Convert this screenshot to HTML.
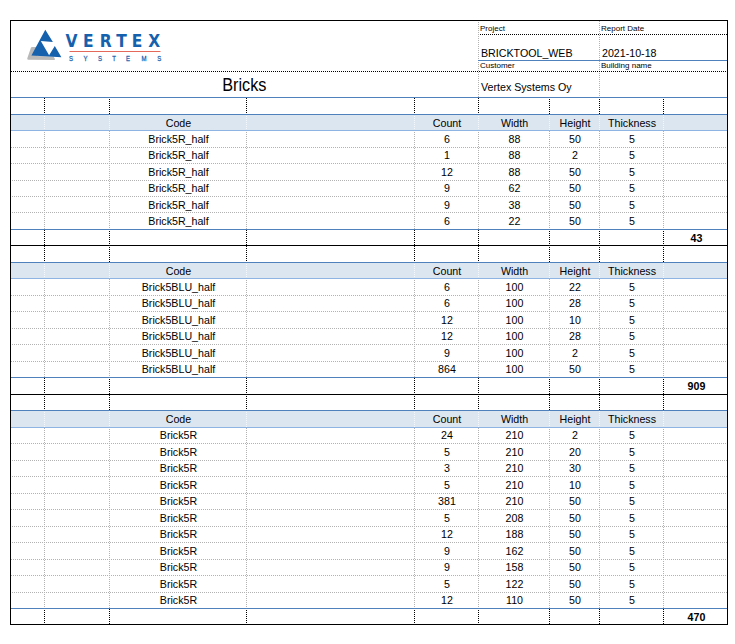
<!DOCTYPE html><html><head><meta charset="utf-8"><title>Bricks</title><style>
html,body{margin:0;padding:0;background:#fff}
body{width:735px;height:644px;position:relative;overflow:hidden;font-family:"Liberation Sans",sans-serif;font-size:10.67px;color:#000}
.h,.v,.t,.f{position:absolute}
.h{height:1px}.v{width:1px}
.t{white-space:nowrap;line-height:12px;height:12px}
.c{text-align:center}
.b{font-weight:bold}
.s{font-size:8px;line-height:10px;height:10px}
.hk,.hg,.vk,.vg,.vw{background-repeat:no-repeat}
.hk{background-image:repeating-linear-gradient(90deg,#000 0 1px,transparent 1px 2px)}
.hg{background-image:repeating-linear-gradient(90deg,#b2b2b2 0 1px,transparent 1px 2px)}
.vk{background-image:repeating-linear-gradient(180deg,#000 0 1px,transparent 1px 2px)}
.vg{background-image:repeating-linear-gradient(180deg,#b2b2b2 0 1px,transparent 1px 2px)}
.vw{background-image:repeating-linear-gradient(180deg,#f4f7fb 0 1px,transparent 1px 2px)}

</style></head><body>
<div class="f" style="left:11px;top:115px;width:716px;height:16px;background:#dce6f1"></div>
<div class="f" style="left:11px;top:263px;width:716px;height:16px;background:#dce6f1"></div>
<div class="f" style="left:11px;top:411px;width:716px;height:16px;background:#dce6f1"></div>
<div class="v vg" style="left:478px;top:21px;height:76px;background-position:0 1px"></div>
<div class="v vg" style="left:599px;top:21px;height:76px;background-position:0 0px"></div>
<div class="h hk" style="left:479px;top:34px;width:248px;background-position:1px 0"></div>
<div class="h" style="left:478px;top:60px;width:249px;background:#4f81bd"></div>
<div class="h hk" style="left:11px;top:71px;width:716px;background-position:0px 0"></div>
<div class="h" style="left:11px;top:97px;width:716px;background:#4f81bd"></div>
<div class="v vk" style="left:44px;top:98px;height:16px;background-position:0 0px"></div>
<div class="v vk" style="left:109px;top:98px;height:16px;background-position:0 1px"></div>
<div class="v vk" style="left:246px;top:98px;height:16px;background-position:0 0px"></div>
<div class="v vk" style="left:414px;top:98px;height:16px;background-position:0 0px"></div>
<div class="v vk" style="left:478px;top:98px;height:16px;background-position:0 0px"></div>
<div class="v vk" style="left:549px;top:98px;height:16px;background-position:0 1px"></div>
<div class="v vk" style="left:599px;top:98px;height:16px;background-position:0 1px"></div>
<div class="v vk" style="left:663px;top:98px;height:16px;background-position:0 1px"></div>
<div class="h" style="left:11px;top:114px;width:716px;background:#4f81bd"></div>
<div class="h" style="left:11px;top:130px;width:716px;background:#8db4e2"></div>
<div class="v vw" style="left:44px;top:115px;height:15px;background-position:0 1px"></div>
<div class="v vw" style="left:109px;top:115px;height:15px;background-position:0 0px"></div>
<div class="v vw" style="left:246px;top:115px;height:15px;background-position:0 1px"></div>
<div class="v vw" style="left:414px;top:115px;height:15px;background-position:0 1px"></div>
<div class="v vw" style="left:478px;top:115px;height:15px;background-position:0 1px"></div>
<div class="v vw" style="left:549px;top:115px;height:15px;background-position:0 0px"></div>
<div class="v vw" style="left:599px;top:115px;height:15px;background-position:0 0px"></div>
<div class="v vw" style="left:663px;top:115px;height:15px;background-position:0 0px"></div>
<div class="v vg" style="left:44px;top:131px;height:16px;background-position:0 1px"></div>
<div class="v vg" style="left:109px;top:131px;height:16px;background-position:0 0px"></div>
<div class="v vg" style="left:246px;top:131px;height:16px;background-position:0 1px"></div>
<div class="v vg" style="left:414px;top:131px;height:16px;background-position:0 1px"></div>
<div class="v vg" style="left:478px;top:131px;height:16px;background-position:0 1px"></div>
<div class="v vg" style="left:549px;top:131px;height:16px;background-position:0 0px"></div>
<div class="v vg" style="left:599px;top:131px;height:16px;background-position:0 0px"></div>
<div class="v vg" style="left:663px;top:131px;height:16px;background-position:0 0px"></div>
<div class="h hg" style="left:11px;top:147px;width:716px;background-position:0px 0"></div>
<div class="v vg" style="left:44px;top:148px;height:15px;background-position:0 0px"></div>
<div class="v vg" style="left:109px;top:148px;height:15px;background-position:0 1px"></div>
<div class="v vg" style="left:246px;top:148px;height:15px;background-position:0 0px"></div>
<div class="v vg" style="left:414px;top:148px;height:15px;background-position:0 0px"></div>
<div class="v vg" style="left:478px;top:148px;height:15px;background-position:0 0px"></div>
<div class="v vg" style="left:549px;top:148px;height:15px;background-position:0 1px"></div>
<div class="v vg" style="left:599px;top:148px;height:15px;background-position:0 1px"></div>
<div class="v vg" style="left:663px;top:148px;height:15px;background-position:0 1px"></div>
<div class="h hg" style="left:11px;top:163px;width:716px;background-position:0px 0"></div>
<div class="v vg" style="left:44px;top:164px;height:16px;background-position:0 0px"></div>
<div class="v vg" style="left:109px;top:164px;height:16px;background-position:0 1px"></div>
<div class="v vg" style="left:246px;top:164px;height:16px;background-position:0 0px"></div>
<div class="v vg" style="left:414px;top:164px;height:16px;background-position:0 0px"></div>
<div class="v vg" style="left:478px;top:164px;height:16px;background-position:0 0px"></div>
<div class="v vg" style="left:549px;top:164px;height:16px;background-position:0 1px"></div>
<div class="v vg" style="left:599px;top:164px;height:16px;background-position:0 1px"></div>
<div class="v vg" style="left:663px;top:164px;height:16px;background-position:0 1px"></div>
<div class="h hg" style="left:11px;top:180px;width:716px;background-position:1px 0"></div>
<div class="v vg" style="left:44px;top:181px;height:15px;background-position:0 1px"></div>
<div class="v vg" style="left:109px;top:181px;height:15px;background-position:0 0px"></div>
<div class="v vg" style="left:246px;top:181px;height:15px;background-position:0 1px"></div>
<div class="v vg" style="left:414px;top:181px;height:15px;background-position:0 1px"></div>
<div class="v vg" style="left:478px;top:181px;height:15px;background-position:0 1px"></div>
<div class="v vg" style="left:549px;top:181px;height:15px;background-position:0 0px"></div>
<div class="v vg" style="left:599px;top:181px;height:15px;background-position:0 0px"></div>
<div class="v vg" style="left:663px;top:181px;height:15px;background-position:0 0px"></div>
<div class="h hg" style="left:11px;top:196px;width:716px;background-position:1px 0"></div>
<div class="v vg" style="left:44px;top:197px;height:15px;background-position:0 1px"></div>
<div class="v vg" style="left:109px;top:197px;height:15px;background-position:0 0px"></div>
<div class="v vg" style="left:246px;top:197px;height:15px;background-position:0 1px"></div>
<div class="v vg" style="left:414px;top:197px;height:15px;background-position:0 1px"></div>
<div class="v vg" style="left:478px;top:197px;height:15px;background-position:0 1px"></div>
<div class="v vg" style="left:549px;top:197px;height:15px;background-position:0 0px"></div>
<div class="v vg" style="left:599px;top:197px;height:15px;background-position:0 0px"></div>
<div class="v vg" style="left:663px;top:197px;height:15px;background-position:0 0px"></div>
<div class="h hg" style="left:11px;top:212px;width:716px;background-position:1px 0"></div>
<div class="v vg" style="left:44px;top:213px;height:16px;background-position:0 1px"></div>
<div class="v vg" style="left:109px;top:213px;height:16px;background-position:0 0px"></div>
<div class="v vg" style="left:246px;top:213px;height:16px;background-position:0 1px"></div>
<div class="v vg" style="left:414px;top:213px;height:16px;background-position:0 1px"></div>
<div class="v vg" style="left:478px;top:213px;height:16px;background-position:0 1px"></div>
<div class="v vg" style="left:549px;top:213px;height:16px;background-position:0 0px"></div>
<div class="v vg" style="left:599px;top:213px;height:16px;background-position:0 0px"></div>
<div class="v vg" style="left:663px;top:213px;height:16px;background-position:0 0px"></div>
<div class="h" style="left:11px;top:229px;width:716px;background:#4f81bd"></div>
<div class="v vk" style="left:44px;top:230px;height:15px;background-position:0 0px"></div>
<div class="v vk" style="left:109px;top:230px;height:15px;background-position:0 1px"></div>
<div class="v vk" style="left:246px;top:230px;height:15px;background-position:0 0px"></div>
<div class="v vk" style="left:414px;top:230px;height:15px;background-position:0 0px"></div>
<div class="v vk" style="left:478px;top:230px;height:15px;background-position:0 0px"></div>
<div class="v vk" style="left:549px;top:230px;height:15px;background-position:0 1px"></div>
<div class="v vk" style="left:599px;top:230px;height:15px;background-position:0 1px"></div>
<div class="v vk" style="left:663px;top:230px;height:15px;background-position:0 1px"></div>
<div class="h" style="left:11px;top:245px;width:716px;background:#000"></div>
<div class="v vk" style="left:44px;top:246px;height:16px;background-position:0 0px"></div>
<div class="v vk" style="left:109px;top:246px;height:16px;background-position:0 1px"></div>
<div class="v vk" style="left:246px;top:246px;height:16px;background-position:0 0px"></div>
<div class="v vk" style="left:414px;top:246px;height:16px;background-position:0 0px"></div>
<div class="v vk" style="left:478px;top:246px;height:16px;background-position:0 0px"></div>
<div class="v vk" style="left:549px;top:246px;height:16px;background-position:0 1px"></div>
<div class="v vk" style="left:599px;top:246px;height:16px;background-position:0 1px"></div>
<div class="v vk" style="left:663px;top:246px;height:16px;background-position:0 1px"></div>
<div class="h" style="left:11px;top:262px;width:716px;background:#4f81bd"></div>
<div class="h" style="left:11px;top:278px;width:716px;background:#8db4e2"></div>
<div class="v vw" style="left:44px;top:263px;height:15px;background-position:0 1px"></div>
<div class="v vw" style="left:109px;top:263px;height:15px;background-position:0 0px"></div>
<div class="v vw" style="left:246px;top:263px;height:15px;background-position:0 1px"></div>
<div class="v vw" style="left:414px;top:263px;height:15px;background-position:0 1px"></div>
<div class="v vw" style="left:478px;top:263px;height:15px;background-position:0 1px"></div>
<div class="v vw" style="left:549px;top:263px;height:15px;background-position:0 0px"></div>
<div class="v vw" style="left:599px;top:263px;height:15px;background-position:0 0px"></div>
<div class="v vw" style="left:663px;top:263px;height:15px;background-position:0 0px"></div>
<div class="v vg" style="left:44px;top:279px;height:16px;background-position:0 1px"></div>
<div class="v vg" style="left:109px;top:279px;height:16px;background-position:0 0px"></div>
<div class="v vg" style="left:246px;top:279px;height:16px;background-position:0 1px"></div>
<div class="v vg" style="left:414px;top:279px;height:16px;background-position:0 1px"></div>
<div class="v vg" style="left:478px;top:279px;height:16px;background-position:0 1px"></div>
<div class="v vg" style="left:549px;top:279px;height:16px;background-position:0 0px"></div>
<div class="v vg" style="left:599px;top:279px;height:16px;background-position:0 0px"></div>
<div class="v vg" style="left:663px;top:279px;height:16px;background-position:0 0px"></div>
<div class="h hg" style="left:11px;top:295px;width:716px;background-position:0px 0"></div>
<div class="v vg" style="left:44px;top:296px;height:15px;background-position:0 0px"></div>
<div class="v vg" style="left:109px;top:296px;height:15px;background-position:0 1px"></div>
<div class="v vg" style="left:246px;top:296px;height:15px;background-position:0 0px"></div>
<div class="v vg" style="left:414px;top:296px;height:15px;background-position:0 0px"></div>
<div class="v vg" style="left:478px;top:296px;height:15px;background-position:0 0px"></div>
<div class="v vg" style="left:549px;top:296px;height:15px;background-position:0 1px"></div>
<div class="v vg" style="left:599px;top:296px;height:15px;background-position:0 1px"></div>
<div class="v vg" style="left:663px;top:296px;height:15px;background-position:0 1px"></div>
<div class="h hg" style="left:11px;top:311px;width:716px;background-position:0px 0"></div>
<div class="v vg" style="left:44px;top:312px;height:16px;background-position:0 0px"></div>
<div class="v vg" style="left:109px;top:312px;height:16px;background-position:0 1px"></div>
<div class="v vg" style="left:246px;top:312px;height:16px;background-position:0 0px"></div>
<div class="v vg" style="left:414px;top:312px;height:16px;background-position:0 0px"></div>
<div class="v vg" style="left:478px;top:312px;height:16px;background-position:0 0px"></div>
<div class="v vg" style="left:549px;top:312px;height:16px;background-position:0 1px"></div>
<div class="v vg" style="left:599px;top:312px;height:16px;background-position:0 1px"></div>
<div class="v vg" style="left:663px;top:312px;height:16px;background-position:0 1px"></div>
<div class="h hg" style="left:11px;top:328px;width:716px;background-position:1px 0"></div>
<div class="v vg" style="left:44px;top:329px;height:15px;background-position:0 1px"></div>
<div class="v vg" style="left:109px;top:329px;height:15px;background-position:0 0px"></div>
<div class="v vg" style="left:246px;top:329px;height:15px;background-position:0 1px"></div>
<div class="v vg" style="left:414px;top:329px;height:15px;background-position:0 1px"></div>
<div class="v vg" style="left:478px;top:329px;height:15px;background-position:0 1px"></div>
<div class="v vg" style="left:549px;top:329px;height:15px;background-position:0 0px"></div>
<div class="v vg" style="left:599px;top:329px;height:15px;background-position:0 0px"></div>
<div class="v vg" style="left:663px;top:329px;height:15px;background-position:0 0px"></div>
<div class="h hg" style="left:11px;top:344px;width:716px;background-position:1px 0"></div>
<div class="v vg" style="left:44px;top:345px;height:16px;background-position:0 1px"></div>
<div class="v vg" style="left:109px;top:345px;height:16px;background-position:0 0px"></div>
<div class="v vg" style="left:246px;top:345px;height:16px;background-position:0 1px"></div>
<div class="v vg" style="left:414px;top:345px;height:16px;background-position:0 1px"></div>
<div class="v vg" style="left:478px;top:345px;height:16px;background-position:0 1px"></div>
<div class="v vg" style="left:549px;top:345px;height:16px;background-position:0 0px"></div>
<div class="v vg" style="left:599px;top:345px;height:16px;background-position:0 0px"></div>
<div class="v vg" style="left:663px;top:345px;height:16px;background-position:0 0px"></div>
<div class="h hg" style="left:11px;top:361px;width:716px;background-position:0px 0"></div>
<div class="v vg" style="left:44px;top:362px;height:15px;background-position:0 0px"></div>
<div class="v vg" style="left:109px;top:362px;height:15px;background-position:0 1px"></div>
<div class="v vg" style="left:246px;top:362px;height:15px;background-position:0 0px"></div>
<div class="v vg" style="left:414px;top:362px;height:15px;background-position:0 0px"></div>
<div class="v vg" style="left:478px;top:362px;height:15px;background-position:0 0px"></div>
<div class="v vg" style="left:549px;top:362px;height:15px;background-position:0 1px"></div>
<div class="v vg" style="left:599px;top:362px;height:15px;background-position:0 1px"></div>
<div class="v vg" style="left:663px;top:362px;height:15px;background-position:0 1px"></div>
<div class="h" style="left:11px;top:377px;width:716px;background:#4f81bd"></div>
<div class="v vk" style="left:44px;top:378px;height:16px;background-position:0 0px"></div>
<div class="v vk" style="left:109px;top:378px;height:16px;background-position:0 1px"></div>
<div class="v vk" style="left:246px;top:378px;height:16px;background-position:0 0px"></div>
<div class="v vk" style="left:414px;top:378px;height:16px;background-position:0 0px"></div>
<div class="v vk" style="left:478px;top:378px;height:16px;background-position:0 0px"></div>
<div class="v vk" style="left:549px;top:378px;height:16px;background-position:0 1px"></div>
<div class="v vk" style="left:599px;top:378px;height:16px;background-position:0 1px"></div>
<div class="v vk" style="left:663px;top:378px;height:16px;background-position:0 1px"></div>
<div class="h" style="left:11px;top:394px;width:716px;background:#000"></div>
<div class="v vk" style="left:44px;top:395px;height:15px;background-position:0 1px"></div>
<div class="v vk" style="left:109px;top:395px;height:15px;background-position:0 0px"></div>
<div class="v vk" style="left:246px;top:395px;height:15px;background-position:0 1px"></div>
<div class="v vk" style="left:414px;top:395px;height:15px;background-position:0 1px"></div>
<div class="v vk" style="left:478px;top:395px;height:15px;background-position:0 1px"></div>
<div class="v vk" style="left:549px;top:395px;height:15px;background-position:0 0px"></div>
<div class="v vk" style="left:599px;top:395px;height:15px;background-position:0 0px"></div>
<div class="v vk" style="left:663px;top:395px;height:15px;background-position:0 0px"></div>
<div class="h" style="left:11px;top:410px;width:716px;background:#4f81bd"></div>
<div class="h" style="left:11px;top:427px;width:716px;background:#8db4e2"></div>
<div class="v vw" style="left:44px;top:411px;height:16px;background-position:0 1px"></div>
<div class="v vw" style="left:109px;top:411px;height:16px;background-position:0 0px"></div>
<div class="v vw" style="left:246px;top:411px;height:16px;background-position:0 1px"></div>
<div class="v vw" style="left:414px;top:411px;height:16px;background-position:0 1px"></div>
<div class="v vw" style="left:478px;top:411px;height:16px;background-position:0 1px"></div>
<div class="v vw" style="left:549px;top:411px;height:16px;background-position:0 0px"></div>
<div class="v vw" style="left:599px;top:411px;height:16px;background-position:0 0px"></div>
<div class="v vw" style="left:663px;top:411px;height:16px;background-position:0 0px"></div>
<div class="v vg" style="left:44px;top:428px;height:15px;background-position:0 0px"></div>
<div class="v vg" style="left:109px;top:428px;height:15px;background-position:0 1px"></div>
<div class="v vg" style="left:246px;top:428px;height:15px;background-position:0 0px"></div>
<div class="v vg" style="left:414px;top:428px;height:15px;background-position:0 0px"></div>
<div class="v vg" style="left:478px;top:428px;height:15px;background-position:0 0px"></div>
<div class="v vg" style="left:549px;top:428px;height:15px;background-position:0 1px"></div>
<div class="v vg" style="left:599px;top:428px;height:15px;background-position:0 1px"></div>
<div class="v vg" style="left:663px;top:428px;height:15px;background-position:0 1px"></div>
<div class="h hg" style="left:11px;top:443px;width:716px;background-position:0px 0"></div>
<div class="v vg" style="left:44px;top:444px;height:16px;background-position:0 0px"></div>
<div class="v vg" style="left:109px;top:444px;height:16px;background-position:0 1px"></div>
<div class="v vg" style="left:246px;top:444px;height:16px;background-position:0 0px"></div>
<div class="v vg" style="left:414px;top:444px;height:16px;background-position:0 0px"></div>
<div class="v vg" style="left:478px;top:444px;height:16px;background-position:0 0px"></div>
<div class="v vg" style="left:549px;top:444px;height:16px;background-position:0 1px"></div>
<div class="v vg" style="left:599px;top:444px;height:16px;background-position:0 1px"></div>
<div class="v vg" style="left:663px;top:444px;height:16px;background-position:0 1px"></div>
<div class="h hg" style="left:11px;top:460px;width:716px;background-position:1px 0"></div>
<div class="v vg" style="left:44px;top:461px;height:15px;background-position:0 1px"></div>
<div class="v vg" style="left:109px;top:461px;height:15px;background-position:0 0px"></div>
<div class="v vg" style="left:246px;top:461px;height:15px;background-position:0 1px"></div>
<div class="v vg" style="left:414px;top:461px;height:15px;background-position:0 1px"></div>
<div class="v vg" style="left:478px;top:461px;height:15px;background-position:0 1px"></div>
<div class="v vg" style="left:549px;top:461px;height:15px;background-position:0 0px"></div>
<div class="v vg" style="left:599px;top:461px;height:15px;background-position:0 0px"></div>
<div class="v vg" style="left:663px;top:461px;height:15px;background-position:0 0px"></div>
<div class="h hg" style="left:11px;top:476px;width:716px;background-position:1px 0"></div>
<div class="v vg" style="left:44px;top:477px;height:16px;background-position:0 1px"></div>
<div class="v vg" style="left:109px;top:477px;height:16px;background-position:0 0px"></div>
<div class="v vg" style="left:246px;top:477px;height:16px;background-position:0 1px"></div>
<div class="v vg" style="left:414px;top:477px;height:16px;background-position:0 1px"></div>
<div class="v vg" style="left:478px;top:477px;height:16px;background-position:0 1px"></div>
<div class="v vg" style="left:549px;top:477px;height:16px;background-position:0 0px"></div>
<div class="v vg" style="left:599px;top:477px;height:16px;background-position:0 0px"></div>
<div class="v vg" style="left:663px;top:477px;height:16px;background-position:0 0px"></div>
<div class="h hg" style="left:11px;top:493px;width:716px;background-position:0px 0"></div>
<div class="v vg" style="left:44px;top:494px;height:15px;background-position:0 0px"></div>
<div class="v vg" style="left:109px;top:494px;height:15px;background-position:0 1px"></div>
<div class="v vg" style="left:246px;top:494px;height:15px;background-position:0 0px"></div>
<div class="v vg" style="left:414px;top:494px;height:15px;background-position:0 0px"></div>
<div class="v vg" style="left:478px;top:494px;height:15px;background-position:0 0px"></div>
<div class="v vg" style="left:549px;top:494px;height:15px;background-position:0 1px"></div>
<div class="v vg" style="left:599px;top:494px;height:15px;background-position:0 1px"></div>
<div class="v vg" style="left:663px;top:494px;height:15px;background-position:0 1px"></div>
<div class="h hg" style="left:11px;top:509px;width:716px;background-position:0px 0"></div>
<div class="v vg" style="left:44px;top:510px;height:16px;background-position:0 0px"></div>
<div class="v vg" style="left:109px;top:510px;height:16px;background-position:0 1px"></div>
<div class="v vg" style="left:246px;top:510px;height:16px;background-position:0 0px"></div>
<div class="v vg" style="left:414px;top:510px;height:16px;background-position:0 0px"></div>
<div class="v vg" style="left:478px;top:510px;height:16px;background-position:0 0px"></div>
<div class="v vg" style="left:549px;top:510px;height:16px;background-position:0 1px"></div>
<div class="v vg" style="left:599px;top:510px;height:16px;background-position:0 1px"></div>
<div class="v vg" style="left:663px;top:510px;height:16px;background-position:0 1px"></div>
<div class="h hg" style="left:11px;top:526px;width:716px;background-position:1px 0"></div>
<div class="v vg" style="left:44px;top:527px;height:15px;background-position:0 1px"></div>
<div class="v vg" style="left:109px;top:527px;height:15px;background-position:0 0px"></div>
<div class="v vg" style="left:246px;top:527px;height:15px;background-position:0 1px"></div>
<div class="v vg" style="left:414px;top:527px;height:15px;background-position:0 1px"></div>
<div class="v vg" style="left:478px;top:527px;height:15px;background-position:0 1px"></div>
<div class="v vg" style="left:549px;top:527px;height:15px;background-position:0 0px"></div>
<div class="v vg" style="left:599px;top:527px;height:15px;background-position:0 0px"></div>
<div class="v vg" style="left:663px;top:527px;height:15px;background-position:0 0px"></div>
<div class="h hg" style="left:11px;top:542px;width:716px;background-position:1px 0"></div>
<div class="v vg" style="left:44px;top:543px;height:16px;background-position:0 1px"></div>
<div class="v vg" style="left:109px;top:543px;height:16px;background-position:0 0px"></div>
<div class="v vg" style="left:246px;top:543px;height:16px;background-position:0 1px"></div>
<div class="v vg" style="left:414px;top:543px;height:16px;background-position:0 1px"></div>
<div class="v vg" style="left:478px;top:543px;height:16px;background-position:0 1px"></div>
<div class="v vg" style="left:549px;top:543px;height:16px;background-position:0 0px"></div>
<div class="v vg" style="left:599px;top:543px;height:16px;background-position:0 0px"></div>
<div class="v vg" style="left:663px;top:543px;height:16px;background-position:0 0px"></div>
<div class="h hg" style="left:11px;top:559px;width:716px;background-position:0px 0"></div>
<div class="v vg" style="left:44px;top:560px;height:15px;background-position:0 0px"></div>
<div class="v vg" style="left:109px;top:560px;height:15px;background-position:0 1px"></div>
<div class="v vg" style="left:246px;top:560px;height:15px;background-position:0 0px"></div>
<div class="v vg" style="left:414px;top:560px;height:15px;background-position:0 0px"></div>
<div class="v vg" style="left:478px;top:560px;height:15px;background-position:0 0px"></div>
<div class="v vg" style="left:549px;top:560px;height:15px;background-position:0 1px"></div>
<div class="v vg" style="left:599px;top:560px;height:15px;background-position:0 1px"></div>
<div class="v vg" style="left:663px;top:560px;height:15px;background-position:0 1px"></div>
<div class="h hg" style="left:11px;top:575px;width:716px;background-position:0px 0"></div>
<div class="v vg" style="left:44px;top:576px;height:16px;background-position:0 0px"></div>
<div class="v vg" style="left:109px;top:576px;height:16px;background-position:0 1px"></div>
<div class="v vg" style="left:246px;top:576px;height:16px;background-position:0 0px"></div>
<div class="v vg" style="left:414px;top:576px;height:16px;background-position:0 0px"></div>
<div class="v vg" style="left:478px;top:576px;height:16px;background-position:0 0px"></div>
<div class="v vg" style="left:549px;top:576px;height:16px;background-position:0 1px"></div>
<div class="v vg" style="left:599px;top:576px;height:16px;background-position:0 1px"></div>
<div class="v vg" style="left:663px;top:576px;height:16px;background-position:0 1px"></div>
<div class="h hg" style="left:11px;top:592px;width:716px;background-position:1px 0"></div>
<div class="v vg" style="left:44px;top:593px;height:15px;background-position:0 1px"></div>
<div class="v vg" style="left:109px;top:593px;height:15px;background-position:0 0px"></div>
<div class="v vg" style="left:246px;top:593px;height:15px;background-position:0 1px"></div>
<div class="v vg" style="left:414px;top:593px;height:15px;background-position:0 1px"></div>
<div class="v vg" style="left:478px;top:593px;height:15px;background-position:0 1px"></div>
<div class="v vg" style="left:549px;top:593px;height:15px;background-position:0 0px"></div>
<div class="v vg" style="left:599px;top:593px;height:15px;background-position:0 0px"></div>
<div class="v vg" style="left:663px;top:593px;height:15px;background-position:0 0px"></div>
<div class="h" style="left:11px;top:608px;width:716px;background:#4f81bd"></div>
<div class="v vk" style="left:44px;top:609px;height:15px;background-position:0 1px"></div>
<div class="v vk" style="left:109px;top:609px;height:15px;background-position:0 0px"></div>
<div class="v vk" style="left:246px;top:609px;height:15px;background-position:0 1px"></div>
<div class="v vk" style="left:414px;top:609px;height:15px;background-position:0 1px"></div>
<div class="v vk" style="left:478px;top:609px;height:15px;background-position:0 1px"></div>
<div class="v vk" style="left:549px;top:609px;height:15px;background-position:0 0px"></div>
<div class="v vk" style="left:599px;top:609px;height:15px;background-position:0 0px"></div>
<div class="v vk" style="left:663px;top:609px;height:15px;background-position:0 0px"></div>
<div class="h" style="left:10px;top:20px;width:718px;background:#000"></div>
<div class="h" style="left:10px;top:624px;width:718px;background:#000"></div>
<div class="v" style="left:10px;top:20px;height:605px;background:#000"></div>
<div class="v" style="left:727px;top:20px;height:605px;background:#000"></div>
<div class="t c" style="left:110px;top:117px;width:137px">Code</div>
<div class="t c" style="left:415px;top:117px;width:64px">Count</div>
<div class="t c" style="left:479px;top:117px;width:71px">Width</div>
<div class="t c" style="left:550px;top:117px;width:50px">Height</div>
<div class="t c" style="left:600px;top:117px;width:64px">Thickness</div>
<div class="t c" style="left:110px;top:133px;width:137px">Brick5R_half</div>
<div class="t c" style="left:415px;top:133px;width:64px">6</div>
<div class="t c" style="left:479px;top:133px;width:71px">88</div>
<div class="t c" style="left:550px;top:133px;width:50px">50</div>
<div class="t c" style="left:600px;top:133px;width:64px">5</div>
<div class="t c" style="left:110px;top:149px;width:137px">Brick5R_half</div>
<div class="t c" style="left:415px;top:149px;width:64px">1</div>
<div class="t c" style="left:479px;top:149px;width:71px">88</div>
<div class="t c" style="left:550px;top:149px;width:50px">2</div>
<div class="t c" style="left:600px;top:149px;width:64px">5</div>
<div class="t c" style="left:110px;top:166px;width:137px">Brick5R_half</div>
<div class="t c" style="left:415px;top:166px;width:64px">12</div>
<div class="t c" style="left:479px;top:166px;width:71px">88</div>
<div class="t c" style="left:550px;top:166px;width:50px">50</div>
<div class="t c" style="left:600px;top:166px;width:64px">5</div>
<div class="t c" style="left:110px;top:182px;width:137px">Brick5R_half</div>
<div class="t c" style="left:415px;top:182px;width:64px">9</div>
<div class="t c" style="left:479px;top:182px;width:71px">62</div>
<div class="t c" style="left:550px;top:182px;width:50px">50</div>
<div class="t c" style="left:600px;top:182px;width:64px">5</div>
<div class="t c" style="left:110px;top:199px;width:137px">Brick5R_half</div>
<div class="t c" style="left:415px;top:199px;width:64px">9</div>
<div class="t c" style="left:479px;top:199px;width:71px">38</div>
<div class="t c" style="left:550px;top:199px;width:50px">50</div>
<div class="t c" style="left:600px;top:199px;width:64px">5</div>
<div class="t c" style="left:110px;top:215px;width:137px">Brick5R_half</div>
<div class="t c" style="left:415px;top:215px;width:64px">6</div>
<div class="t c" style="left:479px;top:215px;width:71px">22</div>
<div class="t c" style="left:550px;top:215px;width:50px">50</div>
<div class="t c" style="left:600px;top:215px;width:64px">5</div>
<div class="t c b" style="left:664px;top:232px;width:65px">43</div>
<div class="t c" style="left:110px;top:265px;width:137px">Code</div>
<div class="t c" style="left:415px;top:265px;width:64px">Count</div>
<div class="t c" style="left:479px;top:265px;width:71px">Width</div>
<div class="t c" style="left:550px;top:265px;width:50px">Height</div>
<div class="t c" style="left:600px;top:265px;width:64px">Thickness</div>
<div class="t c" style="left:110px;top:281px;width:137px">Brick5BLU_half</div>
<div class="t c" style="left:415px;top:281px;width:64px">6</div>
<div class="t c" style="left:479px;top:281px;width:71px">100</div>
<div class="t c" style="left:550px;top:281px;width:50px">22</div>
<div class="t c" style="left:600px;top:281px;width:64px">5</div>
<div class="t c" style="left:110px;top:297px;width:137px">Brick5BLU_half</div>
<div class="t c" style="left:415px;top:297px;width:64px">6</div>
<div class="t c" style="left:479px;top:297px;width:71px">100</div>
<div class="t c" style="left:550px;top:297px;width:50px">28</div>
<div class="t c" style="left:600px;top:297px;width:64px">5</div>
<div class="t c" style="left:110px;top:314px;width:137px">Brick5BLU_half</div>
<div class="t c" style="left:415px;top:314px;width:64px">12</div>
<div class="t c" style="left:479px;top:314px;width:71px">100</div>
<div class="t c" style="left:550px;top:314px;width:50px">10</div>
<div class="t c" style="left:600px;top:314px;width:64px">5</div>
<div class="t c" style="left:110px;top:330px;width:137px">Brick5BLU_half</div>
<div class="t c" style="left:415px;top:330px;width:64px">12</div>
<div class="t c" style="left:479px;top:330px;width:71px">100</div>
<div class="t c" style="left:550px;top:330px;width:50px">28</div>
<div class="t c" style="left:600px;top:330px;width:64px">5</div>
<div class="t c" style="left:110px;top:347px;width:137px">Brick5BLU_half</div>
<div class="t c" style="left:415px;top:347px;width:64px">9</div>
<div class="t c" style="left:479px;top:347px;width:71px">100</div>
<div class="t c" style="left:550px;top:347px;width:50px">2</div>
<div class="t c" style="left:600px;top:347px;width:64px">5</div>
<div class="t c" style="left:110px;top:363px;width:137px">Brick5BLU_half</div>
<div class="t c" style="left:415px;top:363px;width:64px">864</div>
<div class="t c" style="left:479px;top:363px;width:71px">100</div>
<div class="t c" style="left:550px;top:363px;width:50px">50</div>
<div class="t c" style="left:600px;top:363px;width:64px">5</div>
<div class="t c b" style="left:664px;top:380px;width:65px">909</div>
<div class="t c" style="left:110px;top:413px;width:137px">Code</div>
<div class="t c" style="left:415px;top:413px;width:64px">Count</div>
<div class="t c" style="left:479px;top:413px;width:71px">Width</div>
<div class="t c" style="left:550px;top:413px;width:50px">Height</div>
<div class="t c" style="left:600px;top:413px;width:64px">Thickness</div>
<div class="t c" style="left:110px;top:429px;width:137px">Brick5R</div>
<div class="t c" style="left:415px;top:429px;width:64px">24</div>
<div class="t c" style="left:479px;top:429px;width:71px">210</div>
<div class="t c" style="left:550px;top:429px;width:50px">2</div>
<div class="t c" style="left:600px;top:429px;width:64px">5</div>
<div class="t c" style="left:110px;top:446px;width:137px">Brick5R</div>
<div class="t c" style="left:415px;top:446px;width:64px">5</div>
<div class="t c" style="left:479px;top:446px;width:71px">210</div>
<div class="t c" style="left:550px;top:446px;width:50px">20</div>
<div class="t c" style="left:600px;top:446px;width:64px">5</div>
<div class="t c" style="left:110px;top:462px;width:137px">Brick5R</div>
<div class="t c" style="left:415px;top:462px;width:64px">3</div>
<div class="t c" style="left:479px;top:462px;width:71px">210</div>
<div class="t c" style="left:550px;top:462px;width:50px">30</div>
<div class="t c" style="left:600px;top:462px;width:64px">5</div>
<div class="t c" style="left:110px;top:479px;width:137px">Brick5R</div>
<div class="t c" style="left:415px;top:479px;width:64px">5</div>
<div class="t c" style="left:479px;top:479px;width:71px">210</div>
<div class="t c" style="left:550px;top:479px;width:50px">10</div>
<div class="t c" style="left:600px;top:479px;width:64px">5</div>
<div class="t c" style="left:110px;top:495px;width:137px">Brick5R</div>
<div class="t c" style="left:415px;top:495px;width:64px">381</div>
<div class="t c" style="left:479px;top:495px;width:71px">210</div>
<div class="t c" style="left:550px;top:495px;width:50px">50</div>
<div class="t c" style="left:600px;top:495px;width:64px">5</div>
<div class="t c" style="left:110px;top:512px;width:137px">Brick5R</div>
<div class="t c" style="left:415px;top:512px;width:64px">5</div>
<div class="t c" style="left:479px;top:512px;width:71px">208</div>
<div class="t c" style="left:550px;top:512px;width:50px">50</div>
<div class="t c" style="left:600px;top:512px;width:64px">5</div>
<div class="t c" style="left:110px;top:528px;width:137px">Brick5R</div>
<div class="t c" style="left:415px;top:528px;width:64px">12</div>
<div class="t c" style="left:479px;top:528px;width:71px">188</div>
<div class="t c" style="left:550px;top:528px;width:50px">50</div>
<div class="t c" style="left:600px;top:528px;width:64px">5</div>
<div class="t c" style="left:110px;top:545px;width:137px">Brick5R</div>
<div class="t c" style="left:415px;top:545px;width:64px">9</div>
<div class="t c" style="left:479px;top:545px;width:71px">162</div>
<div class="t c" style="left:550px;top:545px;width:50px">50</div>
<div class="t c" style="left:600px;top:545px;width:64px">5</div>
<div class="t c" style="left:110px;top:561px;width:137px">Brick5R</div>
<div class="t c" style="left:415px;top:561px;width:64px">9</div>
<div class="t c" style="left:479px;top:561px;width:71px">158</div>
<div class="t c" style="left:550px;top:561px;width:50px">50</div>
<div class="t c" style="left:600px;top:561px;width:64px">5</div>
<div class="t c" style="left:110px;top:578px;width:137px">Brick5R</div>
<div class="t c" style="left:415px;top:578px;width:64px">5</div>
<div class="t c" style="left:479px;top:578px;width:71px">122</div>
<div class="t c" style="left:550px;top:578px;width:50px">50</div>
<div class="t c" style="left:600px;top:578px;width:64px">5</div>
<div class="t c" style="left:110px;top:594px;width:137px">Brick5R</div>
<div class="t c" style="left:415px;top:594px;width:64px">12</div>
<div class="t c" style="left:479px;top:594px;width:71px">110</div>
<div class="t c" style="left:550px;top:594px;width:50px">50</div>
<div class="t c" style="left:600px;top:594px;width:64px">5</div>
<div class="t c b" style="left:664px;top:611px;width:65px">470</div>
<div class="t s" style="left:480px;top:24px">Project</div>
<div class="t s" style="left:601px;top:24px">Report Date</div>
<div class="t s" style="left:480px;top:61px">Customer</div>
<div class="t s" style="left:601px;top:61px">Building name</div>
<div class="t" style="left:481px;top:47px">BRICKTOOL_WEB</div>
<div class="t" style="left:602px;top:47px">2021-10-18</div>
<div class="t" style="left:481px;top:81px">Vertex Systems Oy</div>
<div class="t c" style="left:10px;top:75px;width:468px;font-size:18.6px;line-height:20px;height:20px"><span style="display:inline-block;transform:scaleX(.872)">Bricks</span></div>
<svg class="f" style="left:20px;top:22px" width="150" height="46" viewBox="20 22 150 46">
<path d="M32 47 L37 47 L37 56 L53.5 56.5 L55 59 Q55.3 60 54 60 L28.2 59.7 Q26.8 59.6 27.3 58.2 L30.9 47.8 Q31.2 47 32 47 Z" fill="#b9b9b9"/>
<path d="M45.3 29.7 L52.9 41.9 L40.8 41.1 L49.1 55.3 L54.8 46 L61.4 57.2 L31.4 55.4 Z" fill="#1661ad"/>
<rect x="69.5" y="51" width="91" height="1" fill="#e4695a"/>
<text font-family="DejaVu Sans Condensed,Liberation Sans,sans-serif" font-weight="bold" font-size="17.2" fill="#1661ad" text-anchor="middle" y="47" x="71.4 88.4 105.6 121.5 137.1 154.3">VERTEX</text>
<text font-family="Liberation Sans,sans-serif" font-size="7" fill="#1661ad" stroke="#1661ad" stroke-width=".25" text-anchor="middle" transform="scale(0.86,1)" y="60.8" x="82.67 99.53 116.40 132.79 148.84 167.44 185.23">SYSTEMS</text>
</svg>
</body></html>
